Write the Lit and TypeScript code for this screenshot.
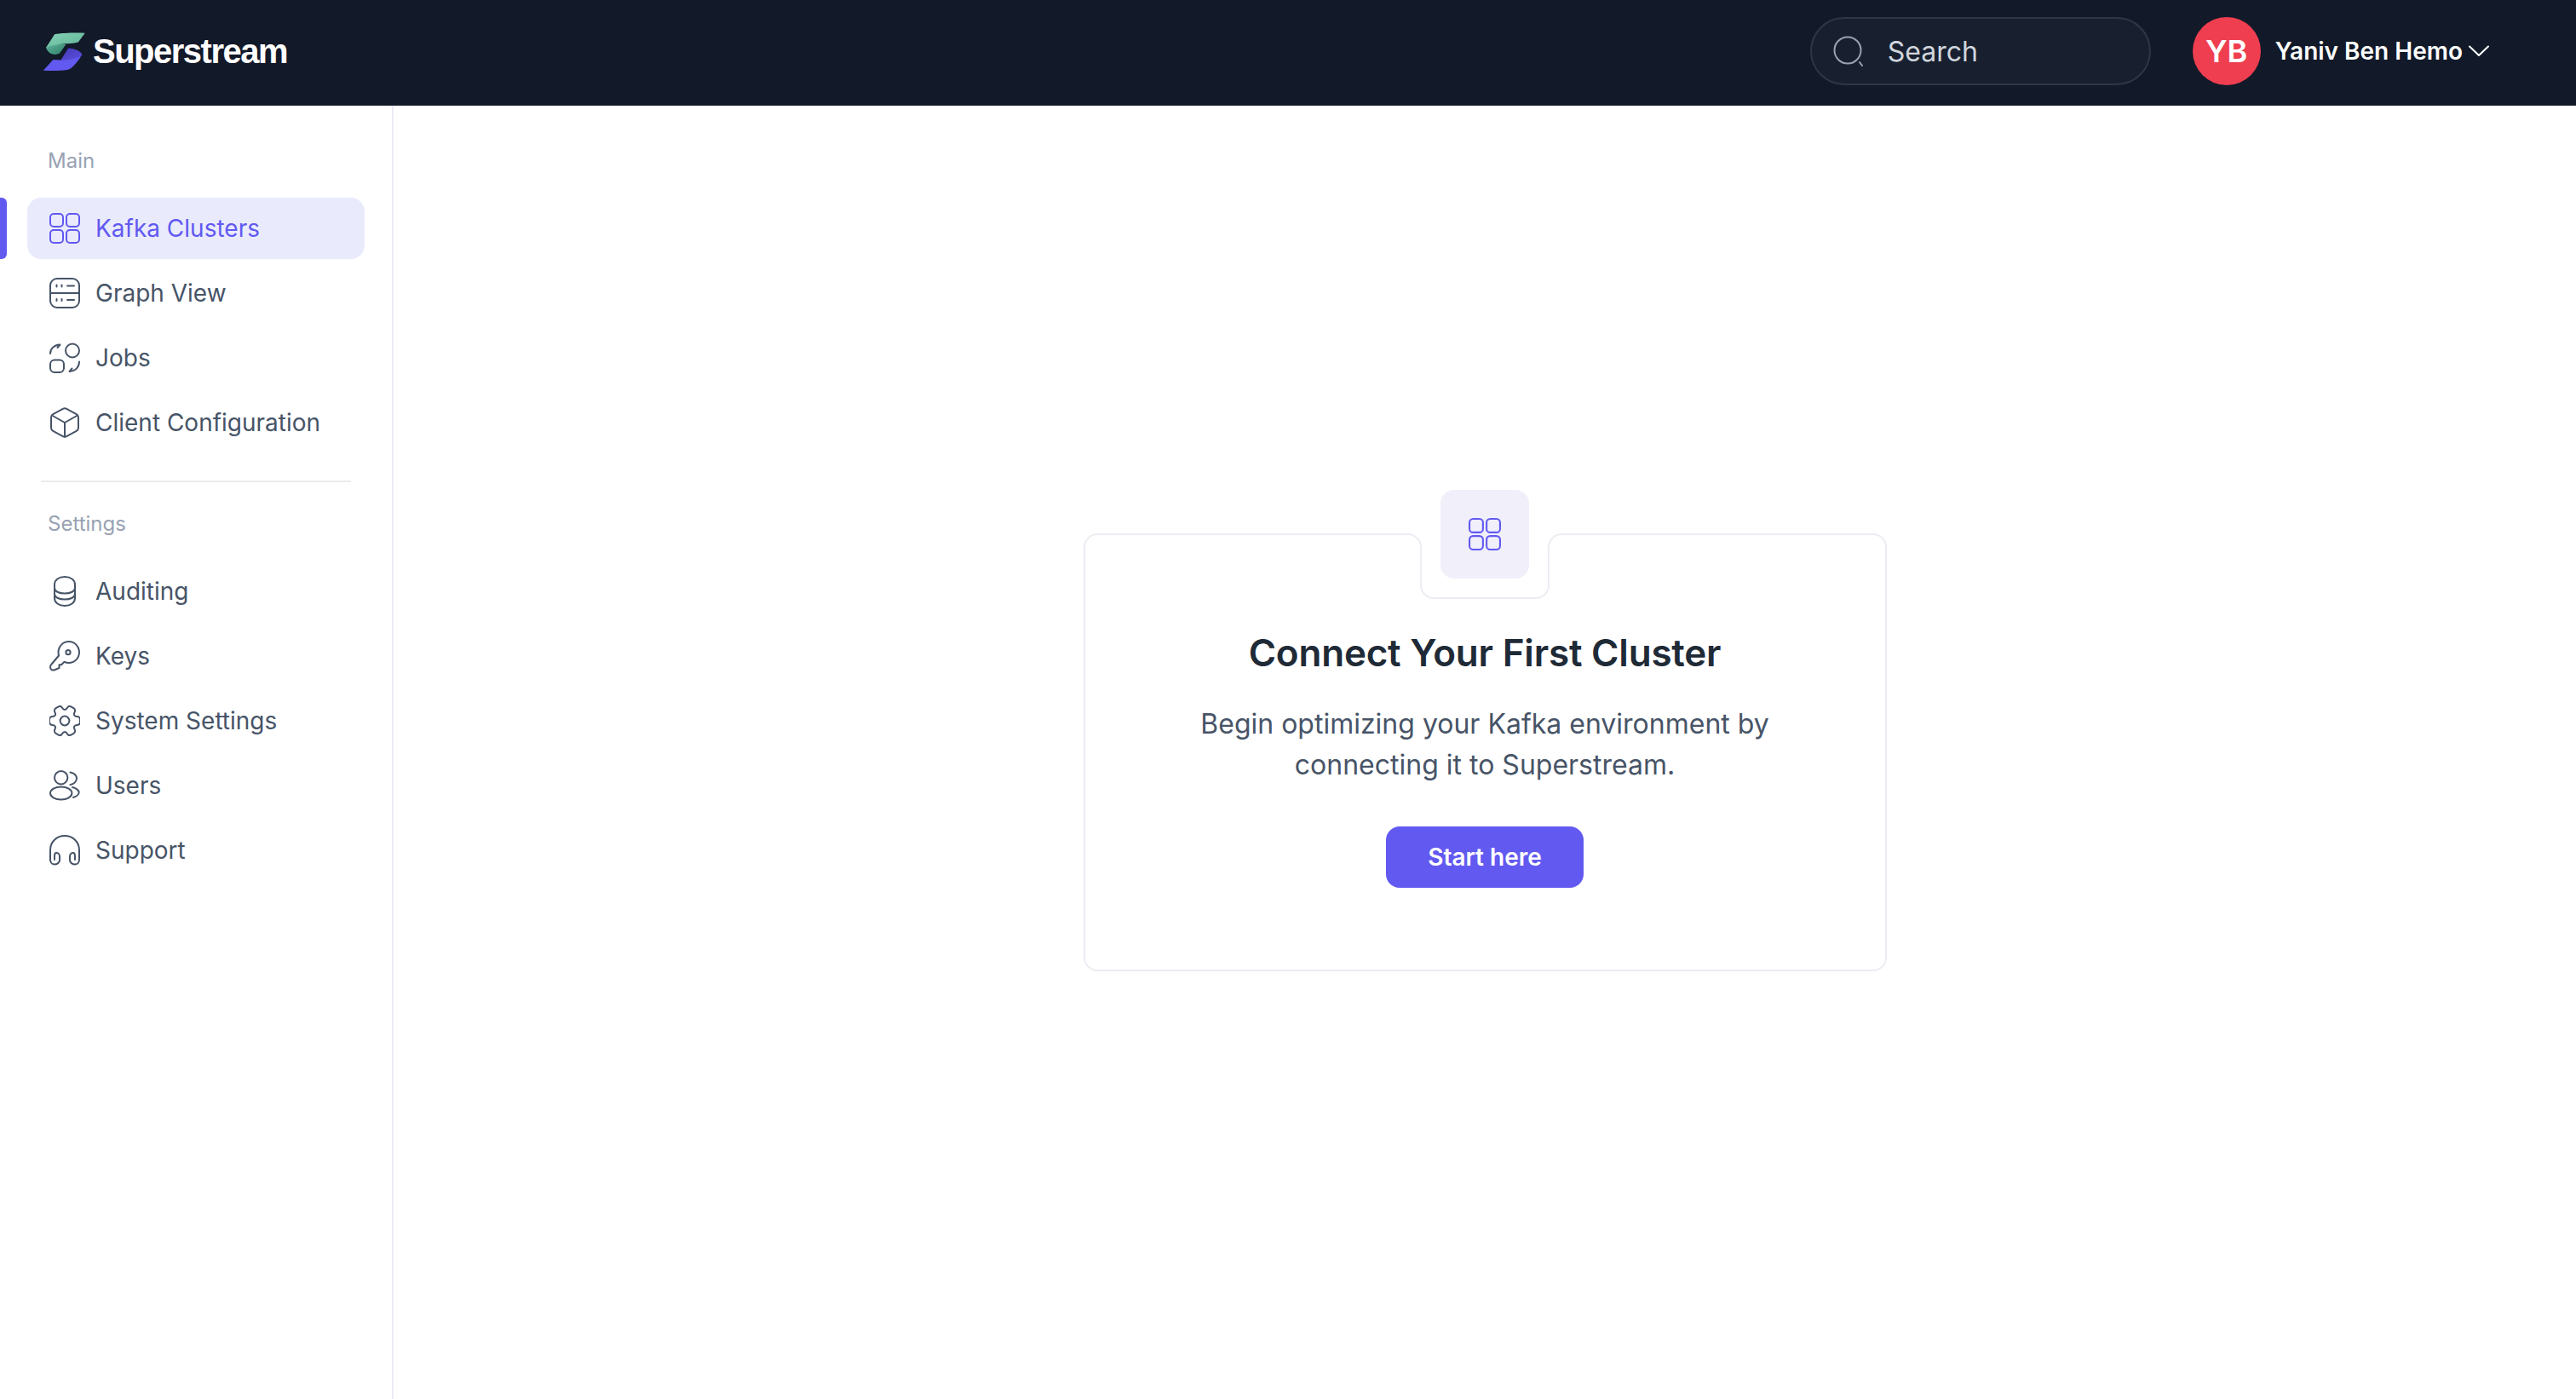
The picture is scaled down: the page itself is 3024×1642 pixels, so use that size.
import { LitElement, css, html, svg } from 'lit';
import { customElement } from 'lit/decorators.js';

const gridIcon = svg`
  <rect x="1" y="1" width="15" height="15" rx="4" />
  <rect x="20" y="1" width="15" height="15" rx="4" />
  <rect x="1" y="20" width="15" height="15" rx="4" />
  <rect x="20" y="20" width="15" height="15" rx="4" />
`;

const graphIcon = svg`
  <rect x="1" y="1" width="34" height="34" rx="8" />
  <path d="M1 18H35" />
  <path d="M8.5 8.5V10.5M14.5 8.5V10.5M21 9.5H29M8.5 25V27M14.5 25V27M21 26H29" />
`;

const jobsIcon = svg`
  <circle cx="27" cy="9.5" r="8" />
  <rect x="1" y="20.5" width="16" height="14.5" rx="5" />
  <path d="M1 13C1 7.5 5 3 12.5 2.5L9.5 6" />
  <path d="M35 22.5C35 28.5 31 33.5 23.5 34L26.5 30.5" />
`;

const cubeIcon = svg`
  <path d="M15.8 1.8C17.2 1 18.8 1 20.2 1.8L31.7 8.2C33.2 9 34 10.4 34 12V24C34 25.6 33.2 27 31.7 27.8L20.2 34.2C18.8 35 17.2 35 15.8 34.2L4.3 27.8C2.8 27 2 25.6 2 24V12C2 10.4 2.8 9 4.3 8.2Z" />
  <path d="M3 9.5L18 18L33 9.5M18 18V34.5" />
`;

const databaseIcon = svg`
  <path d="M6 10C6 4.5 11 1 18 1C25 1 30 4.5 30 10V26C30 31.5 25 35 18 35C11 35 6 31.5 6 26Z" />
  <path d="M6 14C6 18 11 20.5 18 20.5C25 20.5 30 18 30 14" />
  <path d="M6 21C6 25 11 27.5 18 27.5C25 27.5 30 25 30 21" />
`;

const keyIcon = svg`
  <path d="M10.5 13.5C10.5 6.5 16 1 22.7 1C29.5 1 35 6.5 35 13.5C35 20.5 29.5 26 22.7 26C20.8 26 19.2 25.6 17.6 24.8L14 28.2H11.5V32L5.5 34.5C3 35 1 33.5 1 31C1 29.5 1.5 28.5 2.5 27.5L11 17.5C10.7 16.2 10.5 15 10.5 13.5Z" />
  <circle cx="22" cy="13.7" r="2.6" />
`;

const gearIcon = svg`
  <g transform="scale(1.8) translate(-2 -2)" stroke-width="1.1">
    <circle cx="12" cy="12" r="3" />
    <path d="M2 12.88v-1.76c0-1.04.85-1.9 1.9-1.9 1.81 0 2.55-1.28 1.64-2.85-.52-.9-.21-2.07.7-2.59l1.73-.99c.79-.47 1.81-.19 2.28.6l.11.19c.9 1.57 2.38 1.57 3.29 0l.11-.19c.47-.79 1.49-1.07 2.28-.6l1.73.99c.91.52 1.22 1.69.7 2.59-.91 1.57-.17 2.85 1.64 2.85 1.04 0 1.9.85 1.9 1.9v1.76c0 1.04-.85 1.9-1.9 1.9-1.81 0-2.55 1.28-1.64 2.85.52.91.21 2.07-.7 2.59l-1.73.99c-.79.47-1.81.19-2.28-.6l-.11-.19c-.9-1.57-2.38-1.57-3.29 0l-.11.19c-.47.79-1.49 1.07-2.28.6l-1.73-.99a1.899 1.899 0 0 1-.7-2.59c.91-1.57.17-2.85-1.64-2.85-1.05 0-1.9-.86-1.9-1.9Z" />
  </g>
`;

const usersIcon = svg`
  <circle cx="13.7" cy="8.7" r="7.7" />
  <ellipse cx="13.7" cy="27" rx="12.7" ry="7.5" />
  <path d="M24.5 2.5C29 3 32 6.5 32 9.5C32 13 29 16.5 24.5 17" />
  <path d="M27 20C31 20.8 34.7 23.5 34.7 26C34.7 28.5 31.5 31 28 32" />
`;

const supportIcon = svg`
  <path d="M1 29V18C1 8 8.5 1 18 1C27.5 1 35 8 35 18V29C35 32 33 34.5 30 34.5C27 34.5 24 32.5 24 29.5V25C24 22.5 26 21 28 21C29.5 21 30 22.5 30 25V29" />
  <path d="M1 29C1 32 3 34.5 6 34.5C9 34.5 12 32.5 12 29.5V25C12 22.5 10 21 8 21C6.5 21 6 22.5 6 25V29" />
`;

type NavItem = { label: string; icon: unknown; active?: boolean };

const mainNav: NavItem[] = [
  { label: 'Kafka Clusters', icon: gridIcon, active: true },
  { label: 'Graph View', icon: graphIcon },
  { label: 'Jobs', icon: jobsIcon },
  { label: 'Client Configuration', icon: cubeIcon },
];

const settingsNav: NavItem[] = [
  { label: 'Auditing', icon: databaseIcon },
  { label: 'Keys', icon: keyIcon },
  { label: 'System Settings', icon: gearIcon },
  { label: 'Users', icon: usersIcon },
  { label: 'Support', icon: supportIcon },
];

@customElement('app-root')
export class AppRoot extends LitElement {
  private renderItem(item: NavItem) {
    return html`
      <a class="nav-item ${item.active ? 'active' : ''}">
        <svg class="nav-icon" viewBox="0 0 36 36">${item.icon}</svg>
        <span>${item.label}</span>
      </a>
    `;
  }

  render() {
    return html`
      <header class="topbar">
        <div class="brand">
          <svg class="logo" viewBox="60 48 150 142">
            <defs>
              <linearGradient id="g1" x1="0" y1="0" x2="1" y2="1">
                <stop offset="0" stop-color="#86d1b6" />
                <stop offset="1" stop-color="#5fb497" />
              </linearGradient>
              <linearGradient id="g2" x1="0" y1="0" x2="1" y2="1">
                <stop offset="0" stop-color="#5fb497" />
                <stop offset="1" stop-color="#2f7f6a" />
              </linearGradient>
              <linearGradient id="p1" x1="0" y1="0" x2="1" y2="1">
                <stop offset="0" stop-color="#4539b8" />
                <stop offset="1" stop-color="#5c50e0" />
              </linearGradient>
            </defs>
            <path fill="url(#g2)" d="M72 103C85 92 120 88 142 94L120 125C105 133 85 131 76 114C73 110 72 106 72 103Z" />
            <path fill="url(#g1)" d="M102 58C130 52 180 52 210 53L186 86C170 92 150 90 130 92C110 95 85 98 72 105Z" />
            <path fill="url(#p1)" d="M150 108C170 105 195 118 200 130L180 152L124 150Z" />
            <path fill="#6259f1" d="M97 148C125 152 170 148 196 136C182 155 165 180 150 183C120 188 90 188 62 186Z" />
          </svg>
          <span class="brand-name">Superstream</span>
        </div>
        <div class="topbar-right">
          <label class="search">
            <svg class="search-icon" viewBox="0 0 36 36">
              <circle cx="17" cy="17" r="15.5" />
              <path d="M31 31L34 35" />
            </svg>
            <span>Search</span>
          </label>
          <div class="user">
            <div class="avatar">YB</div>
            <span class="user-name">Yaniv Ben Hemo</span>
            <svg class="chevron" viewBox="0 0 24 14">
              <path d="M1 1.5L12 12L23 1.5" />
            </svg>
          </div>
        </div>
      </header>
      <div class="body">
        <aside class="sidebar">
          <div class="section-label">Main</div>
          <nav class="nav">${mainNav.map((i) => this.renderItem(i))}</nav>
          <div class="divider"></div>
          <div class="section-label">Settings</div>
          <nav class="nav">${settingsNav.map((i) => this.renderItem(i))}</nav>
        </aside>
        <main class="content">
          <section class="card">
            <svg class="card-outline" viewBox="0 0 943 514">
              <path
                d="M16 1H381C389 1 396 8 396 16V61C396 69 403 76 411 76H531C539 76 546 69 546 61V16C546 8 553 1 561 1H927C935 1 942 8 942 16V498C942 506 935 513 927 513H16C8 513 1 506 1 498V16C1 8 8 1 16 1Z"
              />
            </svg>
            <div class="card-badge">
              <svg class="badge-icon" viewBox="0 0 36 36">${gridIcon}</svg>
            </div>
            <h1>Connect Your First Cluster</h1>
            <p>Begin optimizing your Kafka environment by<br />connecting it to Superstream.</p>
            <button class="cta">Start here</button>
          </section>
        </main>
      </div>
    `;
  }

  static styles = css`
    :host {
      display: flex;
      flex-direction: column;
      height: 1642px;
      font-family: Inter, 'Noto Sans', sans-serif;
      background: #fff;
      color: #475467;
    }

    .topbar {
      flex: none;
      height: 124px;
      box-sizing: border-box;
      display: flex;
      align-items: center;
      justify-content: space-between;
      background: #121929;
      padding: 0 102px 4px 50px;
    }

    .brand {
      display: flex;
      align-items: center;
      gap: 9px;
    }

    .logo {
      width: 50px;
      height: 47px;
    }

    .brand-name {
      font-family: 'Liberation Sans', Arial, sans-serif;
      font-size: 40px;
      font-weight: 700;
      letter-spacing: -1.5px;
      color: #fff;
    }

    .topbar-right {
      display: flex;
      align-items: center;
      gap: 49px;
    }

    .search {
      width: 400px;
      height: 80px;
      box-sizing: border-box;
      display: flex;
      align-items: center;
      gap: 28px;
      padding-left: 25px;
      border: 2px solid #2f3646;
      border-radius: 40px;
      background: #182030;
      color: #d0d5dd;
      font-size: 32px;
    }

    .search-icon {
      width: 36px;
      height: 36px;
      fill: none;
      stroke: #98a2b3;
      stroke-width: 2;
      stroke-linecap: round;
    }

    .user {
      display: flex;
      align-items: center;
      color: #fff;
    }

    .avatar {
      width: 80px;
      height: 80px;
      margin-right: 17px;
      border-radius: 50%;
      display: flex;
      align-items: center;
      justify-content: center;
      background: #ef3e50;
      font-size: 36px;
      font-weight: 600;
    }

    .user-name {
      font-size: 28px;
      font-weight: 600;
    }

    .chevron {
      width: 24px;
      height: 14px;
      margin-left: 7px;
      fill: none;
      stroke: #fff;
      stroke-width: 2;
      stroke-linecap: round;
      stroke-linejoin: round;
    }

    .body {
      flex: 1;
      display: flex;
      min-height: 0;
    }

    .sidebar {
      flex: none;
      width: 462px;
      box-sizing: border-box;
      padding: 49px 32px 0 0;
      border-right: 2px solid #eaecf5;
    }

    .section-label {
      height: 32px;
      margin-left: 56px;
      margin-bottom: 27px;
      font-size: 24px;
      line-height: 32px;
      color: #98a2b3;
    }

    .nav {
      display: flex;
      flex-direction: column;
      gap: 4px;
    }

    .nav-item {
      position: relative;
      height: 72px;
      margin-left: 32px;
      padding-left: 26px;
      display: flex;
      align-items: center;
      gap: 18px;
      border-radius: 16px;
      font-size: 28px;
      color: #475467;
    }

    .nav-item.active {
      background: #e9ebfc;
      color: #6259f1;
    }

    .nav-item.active::before {
      content: '';
      position: absolute;
      left: -32px;
      top: 0;
      bottom: 0;
      width: 8px;
      border-radius: 0 6px 6px 0;
      background: #6259f1;
    }

    .nav-icon {
      flex: none;
      width: 36px;
      height: 36px;
      fill: none;
      stroke: currentColor;
      stroke-width: 2;
      stroke-linecap: round;
      stroke-linejoin: round;
    }

    .divider {
      height: 2px;
      margin: 32px 16px 33px 48px;
      background: #eaecf0;
    }

    .content {
      flex: 1;
      display: flex;
      align-items: center;
      justify-content: center;
    }

    .card {
      position: relative;
      width: 943px;
      height: 514px;
      box-sizing: border-box;
      padding-top: 112px;
      display: flex;
      flex-direction: column;
      align-items: center;
    }

    .card-outline {
      position: absolute;
      inset: 0;
      width: 100%;
      height: 100%;
      fill: none;
      stroke: #ecedf3;
      stroke-width: 2;
    }

    .card-badge {
      position: absolute;
      top: -51px;
      left: 419px;
      width: 104px;
      height: 104px;
      display: flex;
      align-items: center;
      justify-content: center;
      border-radius: 16px;
      background: #f0effa;
    }

    .badge-icon {
      width: 38px;
      height: 38px;
      fill: none;
      stroke: #6259f1;
      stroke-width: 2;
    }

    h1 {
      position: relative;
      margin: 0;
      font-size: 44px;
      line-height: 56px;
      font-weight: 600;
      letter-spacing: -0.2px;
      color: #1f2a37;
    }

    p {
      position: relative;
      margin: 32px 0 0;
      font-size: 32px;
      line-height: 48px;
      text-align: center;
      color: #475467;
    }

    .cta {
      position: relative;
      width: 232px;
      height: 72px;
      margin-top: 48px;
      border: none;
      border-radius: 16px;
      background: #6259f1;
      color: #fff;
      font-family: inherit;
      font-size: 28px;
      font-weight: 600;
    }
  `;
}

declare global {
  interface HTMLElementTagNameMap {
    'app-root': AppRoot;
  }
}
